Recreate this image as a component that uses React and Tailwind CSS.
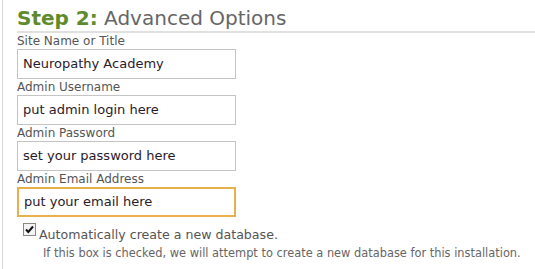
export default function App() {
  const fields = [
    { label: 'Site Name or Title', value: 'Neuropathy Academy' },
    { label: 'Admin Username', value: 'put admin login here' },
    { label: 'Admin Password', value: 'set your password here' },
    { label: 'Admin Email Address', value: 'put your email here', focus: true },
  ];

  return (
    <div className="w-[535px] h-[269px] bg-white overflow-hidden font-['DejaVu_Sans',sans-serif]">
      <div className="ml-[2px] h-full border-l border-[#d8d8d8] pl-[14px]">
        <h2 className="text-[20px] leading-[24px] pt-[6px] pb-[1px] border-b-2 border-[#e0e0e0] text-[#666]">
          <span className="font-bold text-[#5f8b2e]">Step 2:</span> Advanced Options
        </h2>
        <div className="flex flex-col">
          {fields.map((f) => (
            <div key={f.label} className="flex flex-col">
              <label className="text-[12px] leading-[15px] text-[#555] pt-[1px]">{f.label}</label>
              <div
                className={`w-[219px] h-[30px] px-[5px] flex items-center text-[13px] text-[#2a1a2a] border ${
                  f.focus ? 'border-2 border-[#e8b04a] px-[4px]' : 'border-[#c4c4c4]'
                }`}
              >
                {f.value}
              </div>
            </div>
          ))}
        </div>
        <div className="flex items-start pl-[6px] pt-[6px]">
          <div className="w-[13px] h-[13px] border border-[#888] bg-[#f4f4f4] flex items-center justify-center">
            <svg width="11" height="11" viewBox="0 0 11 11">
              <path d="M2 5.5 L4.3 8 L9 2.5" stroke="#111" strokeWidth="2" fill="none" />
            </svg>
          </div>
          <div className="flex flex-col pl-[3px] pt-[4px]">
            <span className="text-[12.6px] leading-[16px] text-[#555]">Automatically create a new database.</span>
            <span className="text-[11.4px] leading-[17px] text-[#666] pl-[4px] pt-[2px]">
              If this box is checked, we will attempt to create a new database for this installation.
            </span>
          </div>
        </div>
      </div>
    </div>
  );
}
